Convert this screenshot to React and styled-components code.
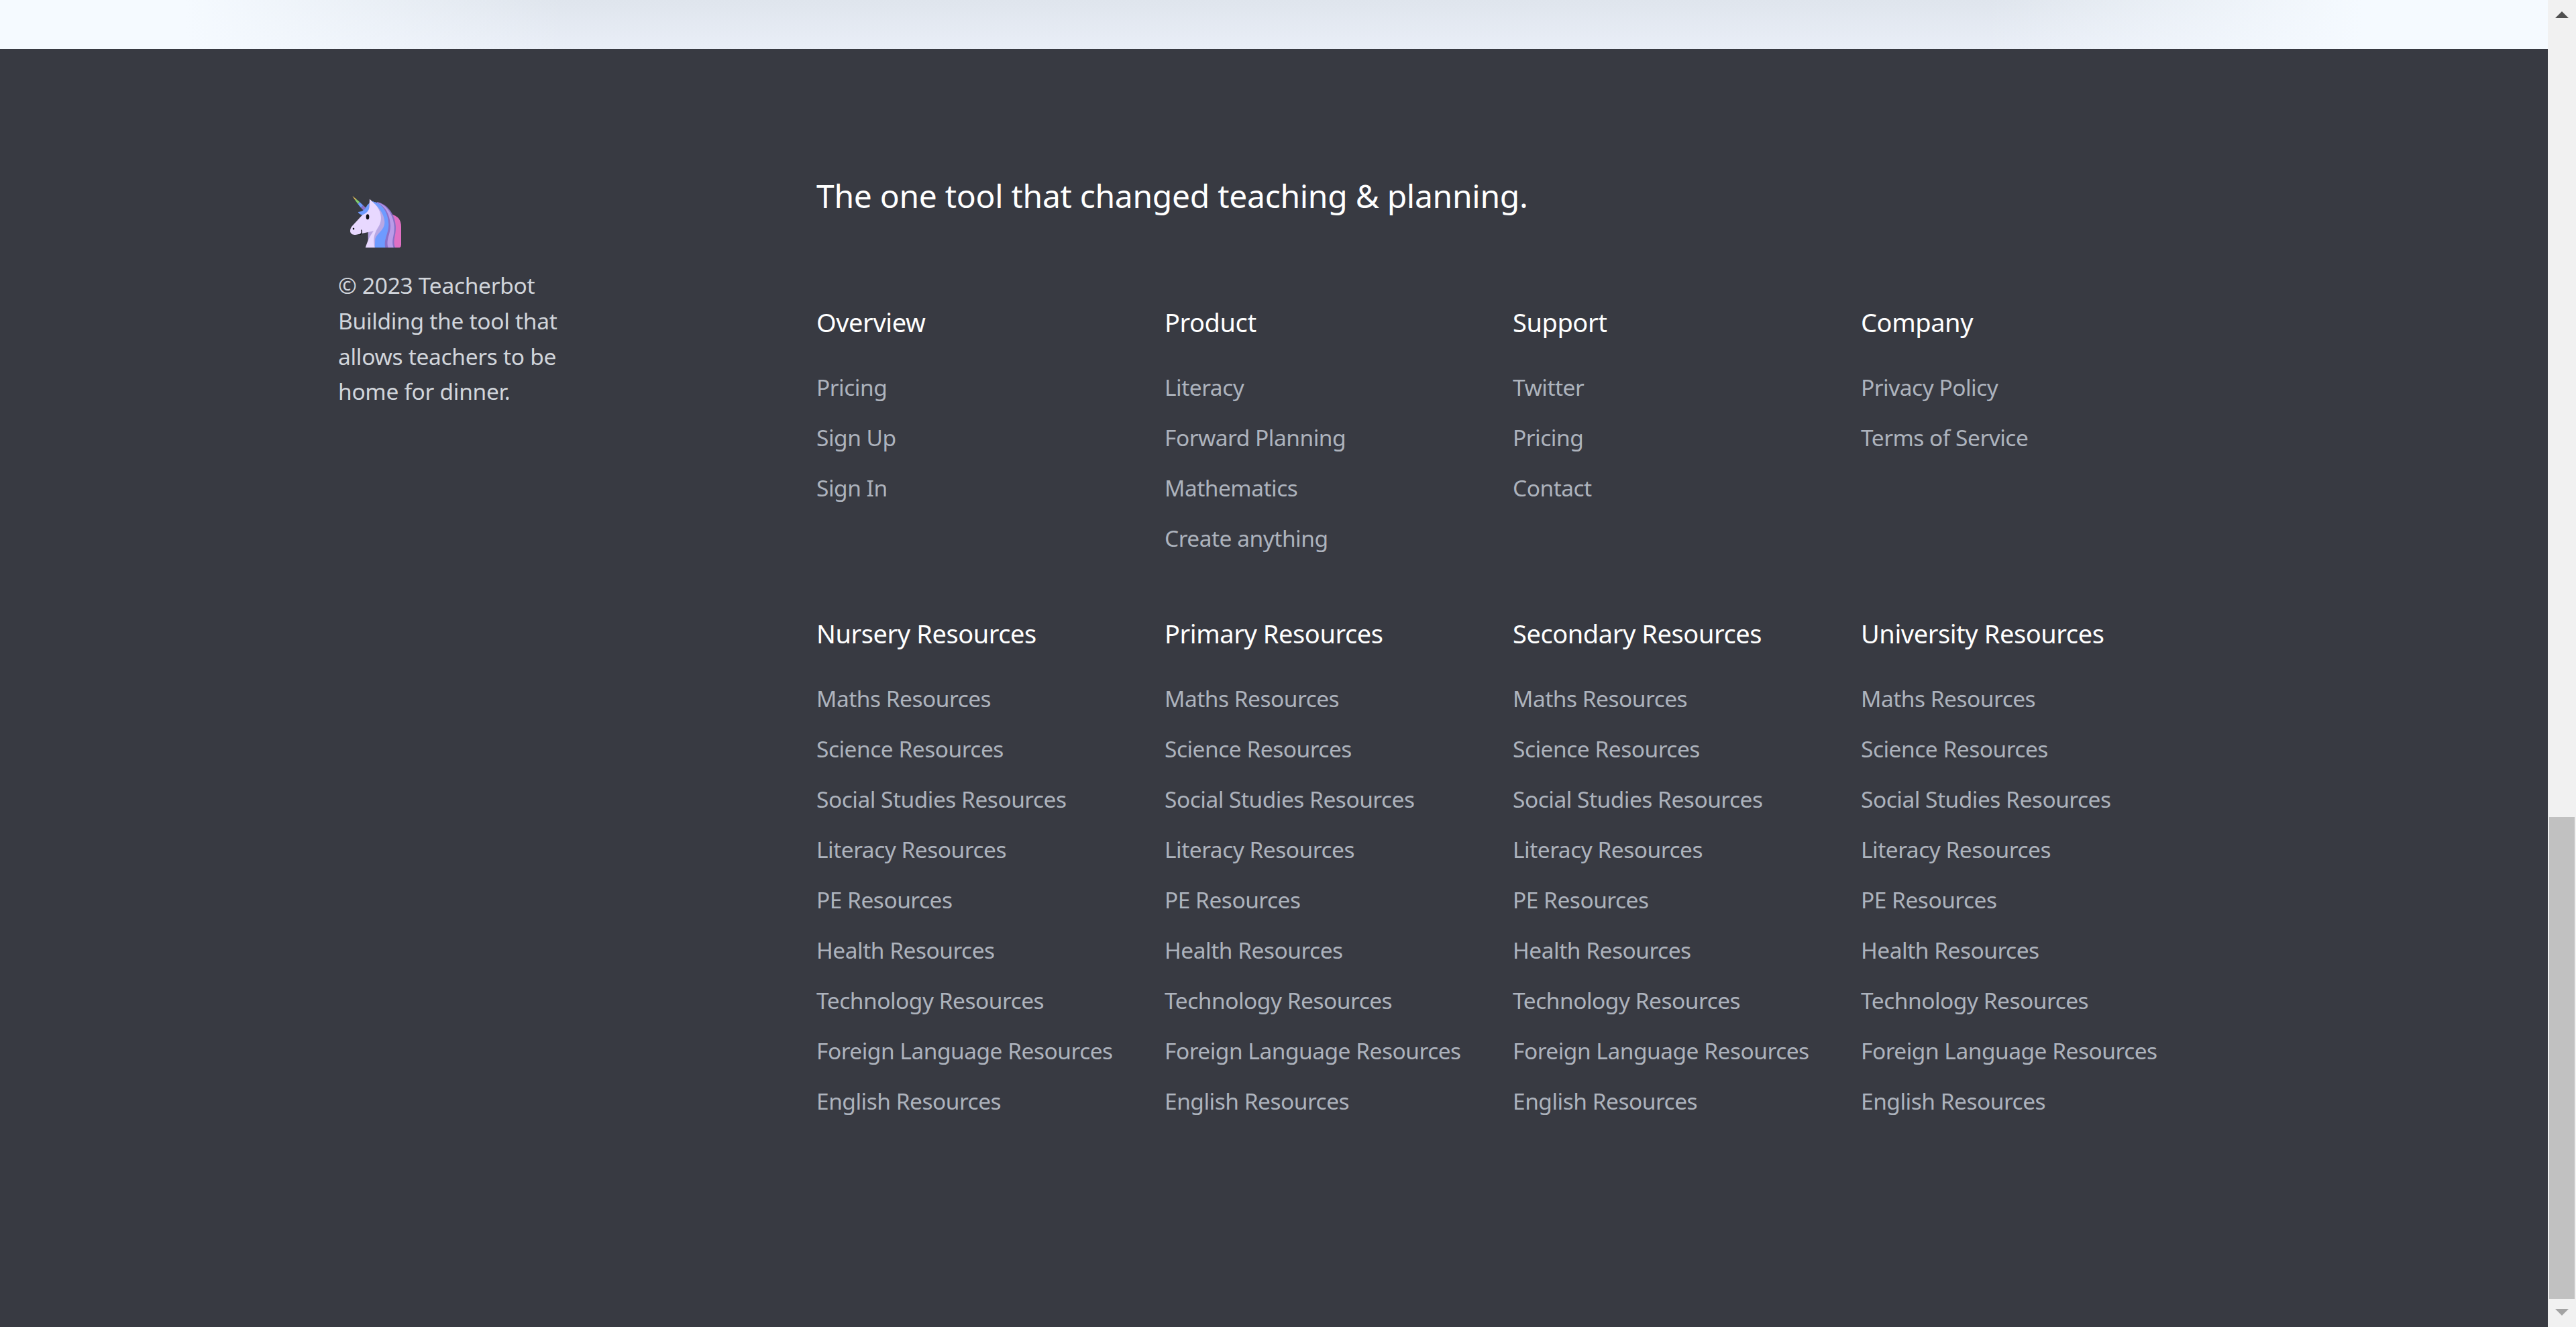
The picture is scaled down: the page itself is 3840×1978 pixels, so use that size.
import styled, { createGlobalStyle } from "styled-components";

const GlobalStyle = createGlobalStyle`
  html, body {
    margin: 0;
    padding: 0;
    height: 100%;
    overflow: hidden;
    background: #383a42;
  }
  #root {
    height: 100%;
  }
`;

const subjects = [
  "Maths Resources",
  "Science Resources",
  "Social Studies Resources",
  "Literacy Resources",
  "PE Resources",
  "Health Resources",
  "Technology Resources",
  "Foreign Language Resources",
  "English Resources",
];

const topColumns = [
  { title: "Overview", links: ["Pricing", "Sign Up", "Sign In"] },
  { title: "Product", links: ["Literacy", "Forward Planning", "Mathematics", "Create anything"] },
  { title: "Support", links: ["Twitter", "Pricing", "Contact"] },
  { title: "Company", links: ["Privacy Policy", "Terms of Service"] },
];

const resourceColumns = [
  "Nursery Resources",
  "Primary Resources",
  "Secondary Resources",
  "University Resources",
].map((title) => ({ title, links: subjects }));

function Unicorn() {
  return (
    <Logo viewBox="20 13 228 232" aria-label="Teacherbot">
      <path d="M200 95C232 100 248 120 248 150V232Q248 245 235 245H205Z" fill="#e070c4" />
      <path d="M140 40C190 50 222 100 224 150C226 190 208 215 222 245H170Z" fill="#8a70c8" />
      <path d="M140 42C185 52 214 100 217 150C219 190 202 215 214 245H170Z" fill="#ba9ce9" />
      <path d="M130 40C175 50 198 95 200 145C201 185 178 210 190 245H150Z" fill="#8a70c8" />
      <path d="M115 38C165 42 190 90 192 140C193 180 168 210 177 245H120Z" fill="#6e9bff" />
      <path d="M30 13L47 27L43 33Z" fill="#e8c45a" />
      <path d="M43 33L47 27L62 40L55 50Z" fill="#7fcf6e" />
      <path d="M55 50L62 40L78 55L68 66Z" fill="#6e9bff" />
      <path d="M68 66L78 55L90 66L80 78Z" fill="#8a70c8" />
      <path d="M55 85C62 100 85 105 100 88L130 60L125 38C112 38 100 48 92 62C85 75 72 85 55 85Z" fill="#6e9bff" />
      <path d="M107 27L133 52C162 80 180 115 172 145C165 170 140 182 132 205L130 245H100V120Z" fill="#b9a8e4" />
      <path d="M107 27L133 52C158 80 165 115 150 145C135 170 118 195 130 245H88C95 225 105 195 125 170L48 186C32 190 20 182 20 170C20 160 24 152 32 144L75 98C90 92 106 80 107 58Z" fill="#e8d8ff" />
      <ellipse cx="98" cy="107" rx="7" ry="12" fill="#101014" />
      <ellipse cx="35" cy="160" rx="4" ry="4.5" fill="#101014" />
      <path d="M70 166C73 172 72 180 65 186" fill="none" stroke="#101014" strokeWidth="4" strokeLinecap="round" />
    </Logo>
  );
}

function LinkColumn({ title, links }) {
  return (
    <Column>
      <ColumnTitle>{title}</ColumnTitle>
      <LinkList>
        {links.map((link) => (
          <li key={link}>
            <FooterLink href="#">{link}</FooterLink>
          </li>
        ))}
      </LinkList>
    </Column>
  );
}

export default function App() {
  return (
    <Page>
      <GlobalStyle />
      <Main>
        <TopBand />
        <Footer>
          <Brand>
            <Unicorn />
            <Blurb>
              © 2023 Teacherbot
              <br />
              Building the tool that allows teachers to be home for dinner.
            </Blurb>
          </Brand>
          <Content>
            <Tagline>The one tool that changed teaching &amp; planning.</Tagline>
            <ColumnGrid>
              {topColumns.concat(resourceColumns).map((col) => (
                <LinkColumn key={col.title} title={col.title} links={col.links} />
              ))}
            </ColumnGrid>
          </Content>
        </Footer>
      </Main>
      <Scrollbar>
        <Arrow viewBox="0 0 20 10" $top>
          <path d="M10 0L20 10H0Z" fill="#505050" />
        </Arrow>
        <Thumb />
        <Arrow viewBox="0 0 20 10">
          <path d="M0 0H20L10 10Z" fill="#a3a3a3" />
        </Arrow>
      </Scrollbar>
    </Page>
  );
}

const Page = styled.div`
  display: flex;
  height: 100%;
  font-family: "Noto Sans", "Open Sans", sans-serif;
`;
const Main = styled.div`
  flex: 1;
  display: flex;
  flex-direction: column;
  min-width: 0;
`;
const TopBand = styled.div`
  height: 73px;
  background:
    linear-gradient(
      90deg,
      #f5faff 278px,
      rgba(245, 250, 255, 0) 841px,
      rgba(245, 250, 255, 0) 2957px,
      #f5faff 3520px
    ),
    linear-gradient(180deg, #dfe5ed, #e9eef7);
`;
const Footer = styled.footer`
  flex: 1;
  display: flex;
  padding: 184px 0 0 504px;
  background: #383a42;
`;
const Brand = styled.div`
  width: 713px;
  flex-shrink: 0;
  padding-top: 35px;
`;
const Logo = styled.svg`
  display: block;
  width: 76px;
  height: 77.3px;
  margin-left: 17.7px;
`;
const Blurb = styled.p`
  width: 340px;
  margin: 30px 0 0;
  font-size: 33.5px;
  line-height: 52.7px;
  letter-spacing: -0.3px;
  color: #d1d5db;
`;
const Content = styled.div`
  flex: 1;
`;
const Tagline = styled.h2`
  margin: 0;
  font-size: 48px;
  line-height: 70px;
  font-weight: 400;
  letter-spacing: -0.3px;
  color: #fff;
`;
const ColumnGrid = styled.div`
  display: grid;
  grid-template-columns: repeat(4, 519px);
  row-gap: 87px;
  margin-top: 123px;
`;
const Column = styled.div``;
const ColumnTitle = styled.h3`
  margin: 0;
  font-size: 38px;
  line-height: 60px;
  font-weight: 400;
  letter-spacing: -0.43px;
  color: #fff;
`;
const LinkList = styled.ul`
  display: flex;
  flex-direction: column;
  gap: 25px;
  margin: 42px 0 0;
  padding: 0;
  list-style: none;
`;
const FooterLink = styled.a`
  display: block;
  font-size: 33.5px;
  line-height: 50px;
  letter-spacing: -0.5px;
  color: #adb3bd;
  text-decoration: none;
`;
const Scrollbar = styled.div`
  width: 42px;
  flex-shrink: 0;
  display: flex;
  flex-direction: column;
  align-items: center;
  background: #f1f1f1;
`;
const Arrow = styled.svg`
  display: block;
  width: 20px;
  height: 10px;
  margin: ${(p) => (p.$top ? "17px 0 auto" : "15px 0 17px")};
`;
const Thumb = styled.div`
  width: 38px;
  height: 718px;
  background: #c1c1c1;
`;
